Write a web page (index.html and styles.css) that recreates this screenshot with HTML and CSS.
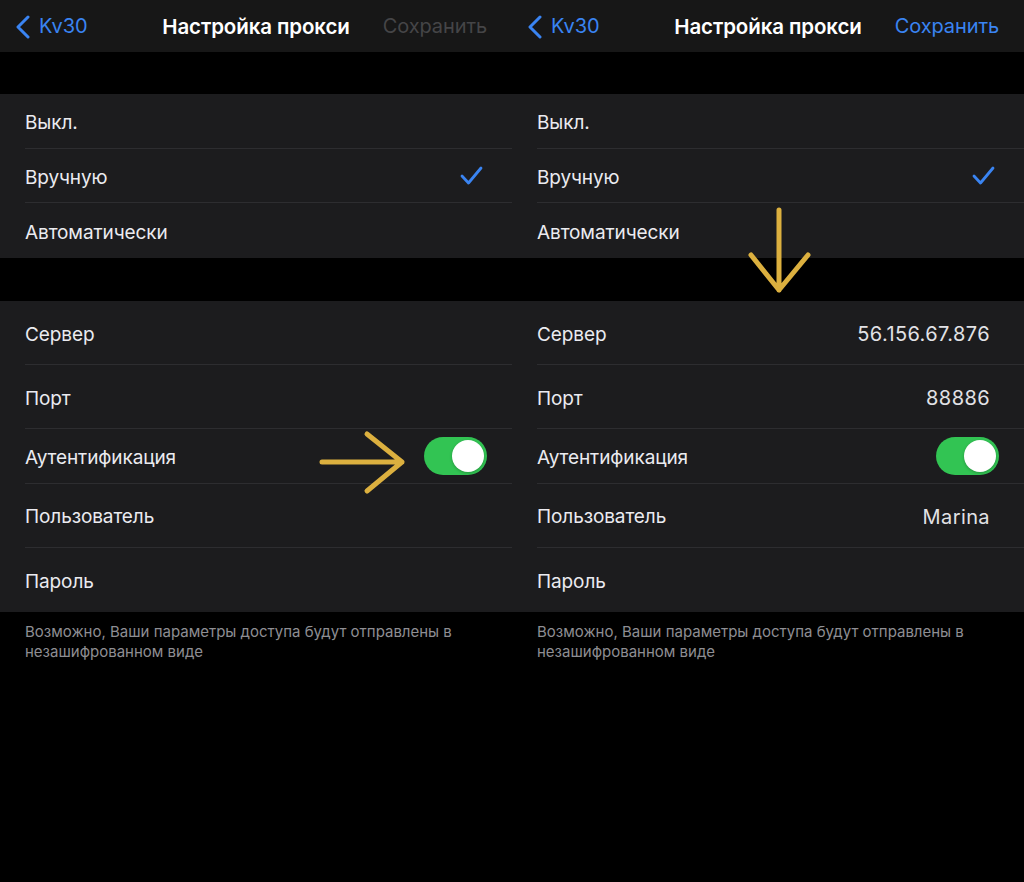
FILE: index.html
```html
<!DOCTYPE html>
<html lang="ru">
<head>
<meta charset="utf-8">
<link rel="stylesheet" href="styles.css">
</head>
<body>
<div class="screens">
  <section class="screen">
    <header class="nav">
      <div class="back">
        <svg class="chev" width="16" height="24" viewBox="0 0 16 24"><path d="M13 2 L3 12 L13 22" fill="none" stroke="#3a84f2" stroke-width="3" stroke-linecap="round" stroke-linejoin="round"/></svg>
        <span>Kv30</span>
      </div>
      <div class="title">Настройка прокси</div>
      <div class="save disabled">Сохранить</div>
    </header>
    <div class="group g1">
      <div class="row short"><span class="label">Выкл.</span></div>
      <div class="row short"><span class="label">Вручную</span>
        <svg class="check" width="24" height="22" viewBox="0 0 24 22"><path d="M2 11 L8.5 18 L21 3" fill="none" stroke="#3a84f2" stroke-width="2.8" stroke-linecap="round" stroke-linejoin="round"/></svg>
      </div>
      <div class="row short"><span class="label">Автоматически</span></div>
    </div>
    <div class="group g2">
      <div class="row tall"><span class="label">Сервер</span></div>
      <div class="row tall"><span class="label">Порт</span></div>
      <div class="row short"><span class="label">Аутентификация</span><span class="toggle"><span class="knob"></span></span></div>
      <div class="row tall"><span class="label">Пользователь</span></div>
      <div class="row tall"><span class="label">Пароль</span></div>
    </div>
    <p class="note">Возможно, Ваши параметры доступа будут отправлены в незашифрованном виде</p>
    <svg class="arrow arrow-right" width="90" height="66" viewBox="0 0 90 66"><path d="M3 33 H83 M48 5 L83 33 L48 62" fill="none" stroke="#dcb03f" stroke-width="5" stroke-linecap="round" stroke-linejoin="round"/></svg>
  </section>

  <section class="screen">
    <header class="nav">
      <div class="back">
        <svg class="chev" width="16" height="24" viewBox="0 0 16 24"><path d="M13 2 L3 12 L13 22" fill="none" stroke="#3a84f2" stroke-width="3" stroke-linecap="round" stroke-linejoin="round"/></svg>
        <span>Kv30</span>
      </div>
      <div class="title">Настройка прокси</div>
      <div class="save">Сохранить</div>
    </header>
    <div class="group g1">
      <div class="row short"><span class="label">Выкл.</span></div>
      <div class="row short"><span class="label">Вручную</span>
        <svg class="check" width="24" height="22" viewBox="0 0 24 22"><path d="M2 11 L8.5 18 L21 3" fill="none" stroke="#3a84f2" stroke-width="2.8" stroke-linecap="round" stroke-linejoin="round"/></svg>
      </div>
      <div class="row short"><span class="label">Автоматически</span></div>
    </div>
    <div class="group g2">
      <div class="row tall"><span class="label">Сервер</span><span class="value">56.156.67.876</span></div>
      <div class="row tall"><span class="label">Порт</span><span class="value">88886</span></div>
      <div class="row short"><span class="label">Аутентификация</span><span class="toggle"><span class="knob"></span></span></div>
      <div class="row tall"><span class="label">Пользователь</span><span class="value">Marina</span></div>
      <div class="row tall"><span class="label">Пароль</span></div>
    </div>
    <p class="note">Возможно, Ваши параметры доступа будут отправлены в незашифрованном виде</p>
    <svg class="arrow arrow-down" width="66" height="90" viewBox="0 0 66 90"><path d="M33 3 V83 M5 48 L33 83 L62 48" fill="none" stroke="#dcb03f" stroke-width="5" stroke-linecap="round" stroke-linejoin="round"/></svg>
  </section>
</div>
</body>
</html>
```

FILE: styles.css
```css
html, body {
  margin: 0;
  padding: 0;
  background: #000;
}
body {
  width: 1024px;
  height: 882px;
  overflow: hidden;
  font-family: Inter, "Noto Sans", "Liberation Sans", sans-serif;
}
.screens {
  display: flex;
  width: 1024px;
  height: 882px;
}
.screen {
  position: relative;
  width: 512px;
  flex: none;
  display: flex;
  flex-direction: column;
}
.nav {
  height: 52px;
  background: #171717;
  display: flex;
  align-items: center;
  justify-content: space-between;
  padding: 0 25px 0 15px;
  box-sizing: border-box;
  position: relative;
}
.back {
  display: flex;
  align-items: center;
  gap: 8px;
  color: #3a84f2;
  font-size: 20px;
  letter-spacing: -0.1px;
}
.chev { margin-top: 1px; }
.title {
  position: absolute;
  left: 0;
  right: 0;
  text-align: center;
  color: #fff;
  font-size: 20.5px;
  font-weight: 600;
  letter-spacing: -0.1px;
  pointer-events: none;
}
.save {
  color: #3a84f2;
  font-size: 20px;
  letter-spacing: -0.1px;
}
.save.disabled { color: #454547; }
.group {
  background: #1c1c1e;
}
.g1 { margin-top: 42px; }
.g2 { margin-top: 43px; }
.row {
  display: flex;
  align-items: center;
  justify-content: space-between;
  margin-left: 25px;
  padding-right: 23px;
  padding-top: 3px;
  box-sizing: border-box;
  border-bottom: 1px solid #2d2d30;
  color: #ebebf0;
  font-size: 19px;
  letter-spacing: -0.1px;
}
.row:last-child { border-bottom: none; }
.row.short { height: 54.7px; }
.row.tall { height: 64px; }
.check { margin-right: 5px; margin-top: -3px; }
.value {
  color: #e2e2e6;
  font-size: 20px;
  letter-spacing: 0.4px;
  margin-right: 11px;
}
.toggle {
  width: 63px;
  height: 38px;
  border-radius: 19px;
  background: #32c453;
  position: relative;
  margin-right: 2px;
  margin-top: -3px;
  display: block;
}
.knob {
  position: absolute;
  right: 3px;
  top: 3px;
  width: 32px;
  height: 32px;
  border-radius: 50%;
  background: #fff;
  box-shadow: 0 1px 3px rgba(0,0,0,0.25);
}
.note {
  margin: 10px 25px 0 25px;
  color: #8e8e93;
  font-size: 15px;
  line-height: 20px;
  letter-spacing: 0;
}
.arrow {
  position: absolute;
}
.arrow-right {
  left: 319px;
  top: 429px;
}
.arrow-down {
  left: 234px;
  top: 207px;
}
```
